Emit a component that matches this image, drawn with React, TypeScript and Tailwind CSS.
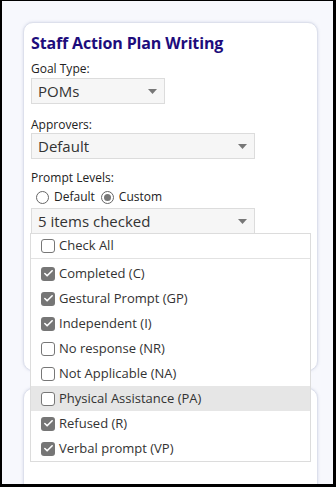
import { Check } from "lucide-react";

const items = [
  { label: "Completed (C)", checked: true },
  { label: "Gestural Prompt (GP)", checked: true },
  { label: "Independent (I)", checked: true },
  { label: "No response (NR)", checked: false },
  { label: "Not Applicable (NA)", checked: false },
  { label: "Physical Assistance (PA)", checked: false, hover: true },
  { label: "Refused (R)", checked: true },
  { label: "Verbal prompt (VP)", checked: true },
];

function Caret() {
  return (
    <svg width="9" height="5" viewBox="0 0 9 5" className="shrink-0">
      <path d="M0 0 L9 0 L4.5 5 Z" fill="#777" />
    </svg>
  );
}

function Select({ value, width }: { value: string; width: string }) {
  return (
    <div
      className={`${width} flex h-[26px] items-center justify-between border border-[#dcdcdc] bg-[#f6f6f6] pl-[6px] pr-[7px] text-[15px] text-[#333]`}
    >
      <span>{value}</span>
      <Caret />
    </div>
  );
}

function Box({ checked }: { checked: boolean }) {
  if (checked) {
    return (
      <span className="flex h-[14px] w-[14px] shrink-0 items-center justify-center rounded-[3px] bg-[#767676]">
        <Check size={11} strokeWidth={3.5} color="#fff" />
      </span>
    );
  }
  return <span className="h-[14px] w-[14px] shrink-0 rounded-[3px] border border-[#777] bg-white" />;
}

function Radio({ on }: { on: boolean }) {
  return (
    <span className="flex h-[13px] w-[13px] shrink-0 items-center justify-center rounded-full border border-[#666] bg-white">
      {on && <span className="h-[7px] w-[7px] rounded-full bg-[#777]" />}
    </span>
  );
}

export default function App() {
  return (
    <div
      className="relative h-[487px] w-[336px] overflow-hidden border-b-[3px] border-l-2 border-r-[3px] border-t border-black bg-[#f7f8fd]"
      style={{ fontFamily: '"Open Sans", "Noto Sans", sans-serif' }}
    >
      <div className="ml-[21px] mt-[21px] flex w-[295px] flex-col gap-[17px]">
        {/* main card */}
        <div className="h-[349px] rounded-[10px] border border-[#dde0ec] bg-white px-[7px] pt-[9px] shadow-[0_0_3px_rgba(120,130,170,0.25)]">
          <h1 className="text-[16px] font-bold leading-[22px] tracking-[-0.15px] text-[#1d0c7c]">
            Staff Action Plan Writing
          </h1>
          <div className="mt-[7px] text-[12px] leading-[16px] text-[#222]">Goal Type:</div>
          <div className="mt-[1px]">
            <Select value="POMs" width="w-[134px]" />
          </div>
          <div className="mt-[13px] text-[12px] leading-[16px] text-[#222]">Approvers:</div>
          <div>
            <Select value="Default" width="w-[224px]" />
          </div>
          <div className="mt-[11px] text-[12px] leading-[16px] text-[#222]">Prompt Levels:</div>
          <div className="ml-[5px] mt-[3px] flex h-[16px] items-center text-[12px] text-[#222]">
            <Radio on={false} />
            <span className="ml-[5px]">Default</span>
            <span className="ml-[6px]">
              <Radio on={true} />
            </span>
            <span className="ml-[5px]">Custom</span>
          </div>
          <div className="mt-[3px]">
            <Select value="5 items checked" width="w-[224px]" />
          </div>
        </div>
        {/* second card, cut off */}
        <div className="h-[120px] rounded-[10px] border border-[#dde0ec] bg-white shadow-[0_0_3px_rgba(120,130,170,0.25)]" />
      </div>

      {/* open dropdown */}
      <div className="absolute left-[28px] top-[232px] w-[281px] border border-[#dcdcdc] bg-white text-[13px] text-[#333]">
        <div className="flex h-[25px] items-center gap-[4px] border-b border-[#e2e2e2] pl-[10px]">
          <Box checked={false} />
          <span>Check All</span>
        </div>
        <div className="pt-[2px]">
          {items.map((it) => (
            <div
              key={it.label}
              className={`flex h-[25px] items-center gap-[4px] pl-[10px] ${it.hover ? "bg-[#e6e6e6]" : ""}`}
            >
              <Box checked={it.checked} />
              <span>{it.label}</span>
            </div>
          ))}
        </div>
      </div>
    </div>
  );
}
